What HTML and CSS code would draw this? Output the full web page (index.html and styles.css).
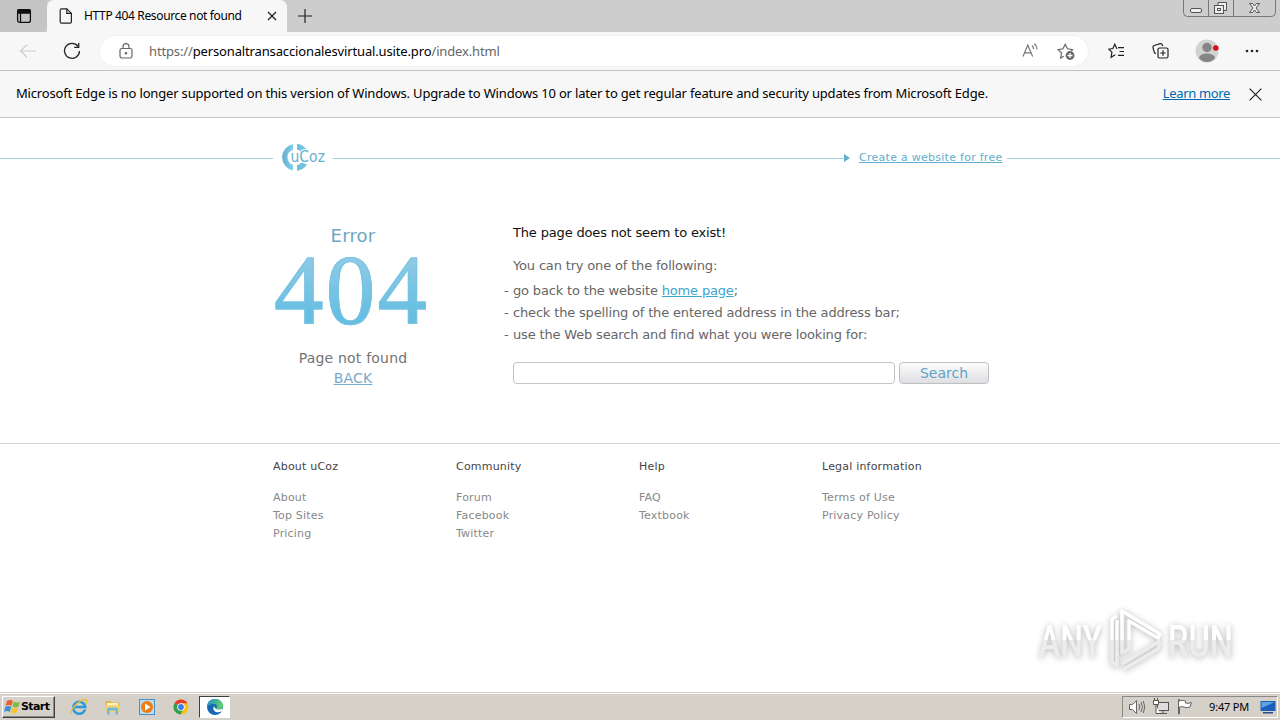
FILE: index.html
```html
<!DOCTYPE html>
<html lang="en">
<head>
  <meta charset="utf-8">
  <title>HTTP 404 Resource not found</title>
  <link rel="stylesheet" href="styles.css">
</head>
<body>
  <div class="titlebar">
    <div class="tab-actions">
      <svg width="16" height="16" viewBox="0 0 16 16" fill="none" stroke="#111" stroke-width="1.3"><rect x="1.6" y="1.6" width="12.8" height="12.8" rx="2"/><path d="M2 2h12v3H2z" fill="#111"/><path d="M4.5 5v9"/></svg>
    </div>
    <div class="tab">
      <svg width="14" height="16" viewBox="0 0 14 16" fill="none" stroke="#222" stroke-width="1.2"><path d="M2.6.8h5.2l4.6 4.6v8.3c0 .8-.6 1.5-1.4 1.5H2.6c-.8 0-1.4-.7-1.4-1.5V2.3C1.2 1.4 1.8.8 2.6.8z"/><path d="M7.8.8v4.6h4.6"/></svg>
      <span class="tab-title">HTTP 404 Resource not found</span>
      <svg class="tab-close" width="10" height="10" viewBox="0 0 10 10" stroke="#222" stroke-width="1.3"><path d="M1 1l8 8M9 1l-8 8"/></svg>
    </div>
    <svg class="new-tab" width="16" height="16" viewBox="0 0 16 16" stroke="#222" stroke-width="1.2"><path d="M8 1v14M1 8h14"/></svg>
    <div class="window-buttons">
      <svg width="93" height="17" viewBox="0 0 93 17" fill="none" stroke="#777">
        <path d="M.5 0v12.5q0 4 4 4h84q4 0 4-4V0M25.5 0v16M50.5 0v16"/>
        <rect x="7.500" y="8.500" width="11" height="4" rx="1.500" fill="#eee" stroke="#555"/>
        <path d="M35 5.500V2.500h8.500v8H41" fill="#eee" stroke="#555"/>
        <rect x="31.500" y="5.500" width="9" height="8" fill="#eee" stroke="#555"/>
        <rect x="34.500" y="8.500" width="3" height="2" stroke="#555"/>
        <path d="M66.500 3.500h3l2 2.500 2-2.500h3l-3.500 4.500 3.500 4.500h-3l-2-2.500-2 2.500h-3l3.500-4.500z" fill="#eee" stroke="#555"/>
      </svg>
    </div>
  </div>

  <div class="toolbar">
    <svg class="back" width="18" height="14" viewBox="0 0 18 14" fill="none" stroke="#ccc" stroke-width="1.2"><path d="M17 7H1.500M8 .8L1.500 7 8 13.200"/></svg>
    <svg class="reload" width="18" height="18" viewBox="0 0 18 18" fill="none" stroke="#222" stroke-width="1.3"><path d="M15 4.300A7.500 7.500 0 1 0 16.500 9"/><path d="M15.700 1v4.300h-4.500"/></svg>
    <div class="address">
      <svg width="14" height="16" viewBox="0 0 14 16" fill="none" stroke="#666" stroke-width="1.2"><rect x="1" y="5.500" width="12" height="9.500" rx="1.800"/><path d="M4 5.500V3.600a3 3 0 0 1 6 0v1.900"/><circle cx="7" cy="10.300" r=".7" fill="#666"/></svg>
      <span class="url">https://<b>personaltransaccionalesvirtual.usite.pro</b>/index.html</span>
      <svg class="read" width="18" height="16" viewBox="0 0 18 16" fill="none" stroke="#777" stroke-width="1.2"><path d="M2 13.500L6.800 2l4.800 11.500M3.700 9.800h6.200M11 2.500q1.500 1.500 1.500 3.600M13.300.5q2.700 2.500 2.700 6"/></svg>
      <svg class="star-add" width="18" height="18" viewBox="0 0 18 18" fill="none" stroke="#666" stroke-width="1.2"><path d="M6.700 14.300L3.700 16l.8-5L1 7.600l5-.8L8.200 2.300l2.300 4.500 5 .8-1.300 1.400"/><circle cx="13" cy="13.500" r="4.400" fill="#666" stroke="none"/><path d="M13 11v5M10.500 13.500h5" stroke="#fff" stroke-width="1.3"/></svg>
    </div>
    <div class="toolbar-icons">
      <svg width="18" height="16" viewBox="0 0 18 16" fill="none" stroke="#222" stroke-width="1.2"><path d="M10 4.600h6M11.500 8.500h4.500M10 12.400h6"/><path d="M9.300 5.500h-.6L6.800 1.200 4.900 5.500.9 6.200l3 3-.8 5.100 4.200-2.500"/></svg>
      <svg width="18" height="18" viewBox="0 0 18 18" fill="none" stroke="#222" stroke-width="1.2"><rect x="6" y="6" width="10" height="10" rx="1.500"/><path d="M11 8.300v5.400M8.300 11h5.400"/><path d="M4 11.500c-1 0-1.500-.5-1.800-1.500L1 5.600c-.2-1 .2-1.800 1.200-2.100l6-1.800c1-.2 1.800.2 2.100 1.200l.6 1"/></svg>
      <svg width="24" height="24" viewBox="0 0 24 24"><circle cx="12" cy="12" r="11.500" fill="#d2d2d2"/><circle cx="12" cy="8.500" r="4.700" fill="#858585"/><path d="M4 19q1-4.500 8-4.500t8 4.500q-3 4-8 4t-8-4z" fill="#858585"/><circle cx="20.800" cy="9" r="2.800" fill="#e00b1c"/></svg>
      <svg width="14" height="4" viewBox="0 0 14 4" fill="#222"><circle cx="2" cy="2" r="1.300"/><circle cx="7" cy="2" r="1.300"/><circle cx="12" cy="2" r="1.300"/></svg>
    </div>
  </div>

  <div class="infobar">
    <span class="info-text">Microsoft Edge is no longer supported on this version of Windows. Upgrade to Windows 10 or later to get regular feature and security updates from Microsoft Edge.</span>
    <a class="learn-more" href="#">Learn more</a>
    <svg width="13" height="13" viewBox="0 0 13 13" stroke="#222" stroke-width="1.2"><path d="M.6.6l11.800 11.800M12.400.6L.6 12.400"/></svg>
  </div>

  <div class="page">
    <div class="header">
      <span class="line line-left"></span>
      <svg class="logo" width="60" height="30" viewBox="0 0 60 30">
        <defs><linearGradient id="ring" x2="1" y2="0"><stop offset="0" stop-color="#68aed2"/><stop offset="1" stop-color="#7fd1e8"/></linearGradient></defs>
        <path d="M20 1A13.500 13.500 0 0 0 20 27.500V22Q14.500 19.500 14.500 14.200T20 6.500z" fill="url(#ring)"/>
        <path d="M24 .8Q30.500 1.500 34 7.500L28.500 9Q27 7 24 6.500zM24 27.700Q30.500 27 34 21.500L28.500 19.500Q27 21.500 24 22z" fill="#6fc3df"/>
        <text x="17.500" y="19" class="logo-text" textLength="34.500" lengthAdjust="spacingAndGlyphs">uCoz</text>
      </svg>
      <span class="line line-mid"></span>
      <span class="arrow"></span>
      <a class="create" href="#">Create a website for free</a>
      <span class="line line-right"></span>
    </div>

    <div class="content">
      <div class="error">
        <div class="error-label">Error</div>
        <div class="error-code">404</div>
        <div class="error-text">Page not found<br><a href="#">BACK</a></div>
      </div>
      <div class="help">
        <h1>The page does not seem to exist!</h1>
        <p>You can try one of the following:</p>
        <ul>
          <li>go back to the website <a href="#">home page</a>;</li>
          <li>check the spelling of the entered address in the address bar;</li>
          <li>use the Web search and find what you were looking for:</li>
        </ul>
        <form class="search">
          <input type="text">
          <button type="button">Search</button>
        </form>
      </div>
    </div>

    <div class="footer">
      <div class="col">
        <h2>About uCoz</h2>
        <a>About</a>
        <a>Top Sites</a>
        <a>Pricing</a>
      </div>
      <div class="col">
        <h2>Community</h2>
        <a>Forum</a>
        <a>Facebook</a>
        <a>Twitter</a>
      </div>
      <div class="col">
        <h2>Help</h2>
        <a>FAQ</a>
        <a>Textbook</a>
      </div>
      <div class="col">
        <h2>Legal information</h2>
        <a>Terms of Use</a>
        <a>Privacy Policy</a>
      </div>
    </div>

    <svg class="watermark" width="230" height="76" viewBox="0 0 230 76">
      <defs><linearGradient id="wm" gradientUnits="userSpaceOnUse" x1="0" y1="0" x2="0" y2="66"><stop offset=".52" stop-color="#fff"/><stop offset=".52" stop-color="#ececec"/></linearGradient></defs>
      <g class="wm-text" fill="url(#wm)">
        <text x="9" y="51" textLength="63" lengthAdjust="spacingAndGlyphs">ANY</text>
        <text x="138" y="51" textLength="65" lengthAdjust="spacingAndGlyphs">RUN</text>
      </g>
      <g class="wm-mark" stroke="url(#wm)">
        <path d="M87 10l-5 3v43l5 4V14M92 47V5l38 23-2 4-29-17v28zM92 58l38-23M94 63l34-20 2-6"/>
      </g>
    </svg>
  </div>

  <div class="taskbar">
    <div class="start">
      <svg width="17" height="16" viewBox="0 0 17 16"><path d="M3 2q3-2 6 0L7.500 7q-3-2-6 0z" fill="#e9602c"/><path d="M10 2.500q3 2 6 0L14.500 7.500q-3 2-6 0z" fill="#7fba42"/><path d="M1.200 8q3-2 6 0L5.700 13q-3-2-5.500 0z" fill="#3c8fd6"/><path d="M8.200 8.500q3 2 6 0L12.700 13.500q-3 2-6 0z" fill="#f8c32c"/></svg>
      <span>Start</span>
    </div>
    <div class="launch">
      <svg width="18" height="18" viewBox="0 0 18 18" fill="none"><path d="M15 11.500A6 6 0 1 1 15.200 9H5" stroke="#2d9ad8" stroke-width="2.600"/><path d="M1.500 16C-1 12 10 1 16 1.500q2 .5 0 4" stroke="#e9bd3a" stroke-width="1.300"/></svg>
      <svg width="18" height="18" viewBox="0 0 18 18"><path d="M1.500 3h5l1 1.500h8V14h-14z" fill="#dfb84c"/><path d="M3 5h11v3H3z" fill="#fff4c2"/><path d="M1.500 7h14v7h-14z" fill="#f3d673"/><path d="M3 16.500v-5q0-2 2-2h7q2 0 2 2v5h-2.500v-4h-6v4z" fill="#6fb9dc"/></svg>
      <svg width="18" height="18" viewBox="0 0 18 18"><rect x="1.500" y="1.500" width="15" height="15" fill="#b9dcf3" stroke="#4e8fc8"/><circle cx="9" cy="9" r="6" fill="#ee7d13"/><path d="M7 5.500l5.500 3.500L7 12.500z" fill="#fff"/></svg>
      <svg width="18" height="18" viewBox="0 0 18 18"><circle cx="9" cy="9" r="7.500" fill="#fbc116"/><path d="M9 9L2.500 5.200A7.500 7.500 0 0 1 15.500 5.200H9z" fill="#e33b2e"/><path d="M2.500 5.200A7.500 7.500 0 0 0 8.500 16.500L11.500 11 9 9z" fill="#2da14c"/><circle cx="9" cy="9" r="3.800" fill="#fff"/><circle cx="9" cy="9" r="2.900" fill="#3b7de8"/></svg>
    </div>
    <div class="running">
      <svg width="18" height="18" viewBox="0 0 18 18"><defs><linearGradient id="edge" x2="1" y2=".3"><stop offset="0" stop-color="#2389d4"/><stop offset="1" stop-color="#5bd269"/></linearGradient></defs><circle cx="9" cy="9" r="8" fill="#1668b3"/><path d="M1 8.500C2 3 5 1 9 1c5 0 8 3.500 8 6.500 0 2.500-2 4-4.500 4-1.500 0-2.500-.7-2-1.500 1.500-2 0-4-3-4C4.500 6 2 7 1 8.500z" fill="url(#edge)"/><path d="M8 8q-2 4 2 6 3 1 6-1l1-2.500q-3 1.500-6 .8Q8.500 10.500 8 8z" fill="#fff"/></svg>
    </div>
    <div class="tray">
      <svg width="18" height="18" viewBox="0 0 18 18" fill="none" stroke="#666"><path d="M1.500 6.500h3l4-4v13l-4-4h-3z" fill="#fff"/><path d="M11 6q1.500 3 0 6M13 4q3 5 0 10M15.300 3q3 6 0 12"/></svg>
      <svg width="18" height="18" viewBox="0 0 18 18" fill="none" stroke="#555"><rect x="5.500" y="4.500" width="11" height="8" fill="#ddd"/><path d="M7 15.500h8M11 13v2"/><path d="M1.500 2.500h5v4h-5zM4 7v8.500h4M2.500 0v2M5.500 0v2" fill="#fff"/></svg>
      <svg width="18" height="18" viewBox="0 0 18 18" fill="#fff" stroke="#666"><path d="M2.500 16V1.500h1V3q3-1.500 6 0v2q3 1 6-.5L14 9q-3 1.500-6 0-2-.8-4.500 0v7z"/></svg>
      <span class="clock">9:47 PM</span>
      <svg width="16" height="14" viewBox="0 0 16 14"><path d="M.5 1h15v10H.5z" fill="#1c5fb8"/><path d="M1.500 2h13L1.500 8z" fill="#5da3e4"/><path d="M3 12h10v1.500H3z" fill="#234e83"/></svg>
    </div>
  </div>
</body>
</html>
```
FILE: styles.css
```css
* {
  box-sizing: border-box;
}

body {
  margin: 0;
  width: 1280px;
  height: 720px;
  overflow: hidden;
  display: flex;
  flex-direction: column;
  background: #fff;
  font-family: "DejaVu Sans", Verdana, sans-serif;
}

svg {
  display: block;
  flex: none;
}

/* browser chrome */
.titlebar {
  height: 32px;
  display: flex;
  align-items: center;
  background: #cdcdcd;
  font-family: "Noto Sans", sans-serif;
}

.tab-actions {
  width: 47px;
  height: 32px;
  padding: 8px 0 0 16px;
  background: #c5c5c5;
  border-radius: 0 0 7px 0;
}

.tab {
  width: 240px;
  height: 32px;
  display: flex;
  align-items: center;
  padding: 0 10px 0 12px;
  background: #f7f7f7;
  border-radius: 7px 7px 0 0;
}

.tab-title {
  margin-left: 11px;
  margin-top: -1px;
  font-size: 12px;
  letter-spacing: -0.36px;
  white-space: nowrap;
}

.tab-close {
  margin-left: auto;
}

.new-tab {
  margin-left: 10px;
}

.window-buttons {
  margin-left: auto;
  margin-right: 4px;
  align-self: flex-start;
}

.toolbar {
  height: 39px;
  display: flex;
  align-items: center;
  background: #f7f7f7;
  border-bottom: 1px solid #c2c2c2;
}

.back {
  margin-left: 19px;
}

.reload {
  margin-left: 26px;
}

.address {
  width: 988px;
  height: 30px;
  margin-left: 19px;
  padding: 0 13px 0 19px;
  display: flex;
  align-items: center;
  background: #fff;
  border-radius: 15px;
  box-shadow: 0 0 0 1px #f1f1f1;
}

.url {
  margin-left: 16px;
  color: #666;
  font: 13px "Noto Sans", sans-serif;
  letter-spacing: -0.14px;
  white-space: nowrap;
}

.url b {
  font-weight: normal;
  color: #000;
}

.read {
  margin-left: auto;
}

.star-add {
  margin-left: 18px;
}

.toolbar-icons {
  flex: 1;
  display: flex;
  align-items: center;
  justify-content: space-between;
  padding: 0 21px 0 20px;
}

.infobar {
  height: 47px;
  display: flex;
  align-items: center;
  padding: 0 18px 0 16px;
  background: #f7f7f7;
  border-bottom: 1px solid #c8c8c8;
  font: 13px "Noto Sans", sans-serif;
  letter-spacing: -0.175px;
  white-space: nowrap;
}

.info-text,
.learn-more {
  margin-top: -2px;
}

.learn-more {
  margin-left: auto;
  margin-right: 19px;
  letter-spacing: -0.35px;
  color: #0067b0;
}

/* error page */
.page {
  flex: 1;
  position: relative;
}

.header {
  height: 30px;
  margin-top: 25px;
  display: flex;
  align-items: center;
}

.line {
  height: 1px;
  background: #a5d0e2;
}

.line-left {
  width: 273px;
}

.line-mid {
  width: 511px;
}

.line-right {
  flex: 1;
  margin-left: 5px;
}

.logo-text {
  font: 16px "DejaVu Sans", sans-serif;
  fill: #69b0d0;
  stroke: #fff;
  stroke-width: 2px;
  paint-order: stroke;
}

.arrow {
  border: 4px solid transparent;
  border-left: 6px solid #5fb0cf;
  border-right: 0;
}

.create {
  margin-left: 9px;
  margin-top: -2px;
  font-size: 11px;
  letter-spacing: 0.27px;
  color: #62aeca;
  white-space: nowrap;
}

.content {
  width: 734px;
  height: 270px;
  margin: 0 auto;
  padding-top: 50px;
  display: flex;
}

.error {
  width: 160px;
  text-align: center;
  color: #737373;
}

.error-label {
  height: 24px;
  margin-top: 1px;
  font-size: 18px;
  line-height: 24px;
  letter-spacing: 0.2px;
  color: #6fa6c4;
}

.error-code {
  height: 100px;
  margin-left: 1px;
  font: 99px/83px "Liberation Serif", serif;
  letter-spacing: 2.2px;
  text-align: left;
  color: transparent;
  background: linear-gradient(#8fcae6 10%, #66bfe2 65%);
  -webkit-background-clip: text;
  background-clip: text;
  -webkit-text-stroke: 1px #78c3e2;
}

.error-text {
  font-size: 14px;
  line-height: 20px;
  letter-spacing: 0.2px;
}

.error-text a {
  color: #79a9cb;
}

.help {
  margin-left: 80px;
  font-size: 13px;
  letter-spacing: -0.165px;
  color: #666;
  white-space: nowrap;
}

.help h1 {
  margin: 0;
  font-size: 13px;
  font-weight: normal;
  line-height: 20px;
  color: #111;
}

.help p {
  margin: 13px 0 4px;
  line-height: 20px;
}

.help ul {
  margin: 0;
  padding: 0;
  list-style: none;
  line-height: 22px;
}

.help li::before {
  content: "-";
  display: inline-block;
  width: 9px;
  margin-left: -9px;
}

.help a {
  color: #3ba4cf;
}

.search {
  display: flex;
  margin-top: 16px;
}

.search input {
  width: 382px;
  height: 22px;
  border: 1px solid #c4c4c4;
  border-radius: 4px;
}

.search button {
  width: 90px;
  height: 22px;
  margin-left: 4px;
  padding: 0;
  border: 1px solid #bfbfbf;
  border-radius: 4px;
  background: linear-gradient(#fdfdfd, #dedfe3);
  font: 14px "DejaVu Sans", sans-serif;
  color: #62a3c6;
}

.footer {
  height: 120px;
  padding: 14px 0 0 273px;
  display: flex;
  border-top: 1px solid #d3d3d3;
}

.col {
  width: 183px;
  font-size: 11px;
  line-height: 18px;
  letter-spacing: 0.2px;
  color: #888;
}

.col h2 {
  margin: 0 0 13px;
  font-size: 11px;
  font-weight: normal;
  line-height: 18px;
  color: #444;
}

.col a {
  display: block;
}

.watermark {
  position: absolute;
  left: 1030px;
  top: 488px;
  filter: drop-shadow(0 1px 3px rgba(0, 0, 0, 0.3));
}

.wm-text {
  font: 500 45px Roboto, sans-serif;
}

.wm-mark {
  fill: none;
  stroke-width: 3.5;
  stroke-linejoin: round;
}

/* taskbar */
.taskbar {
  height: 28px;
  display: flex;
  align-items: center;
  background: #d5d1c9;
  border-top: 1px solid #d5d1c9;
  box-shadow: inset 0 1px #fff;
}

.start {
  width: 53px;
  height: 22px;
  margin-left: 2px;
  padding-left: 1px;
  display: flex;
  align-items: center;
  border: 1px solid;
  border-color: #fff #404040 #404040 #fff;
  box-shadow: inset -1px -1px #888;
  font: bold 11px "DejaVu Sans", sans-serif;
  letter-spacing: -0.6px;
}

.launch {
  display: flex;
  gap: 16px;
  margin-left: 15px;
}

.running {
  width: 31px;
  height: 22px;
  margin-left: 9px;
  padding: 1px 0 0 6px;
  background: #fff;
  border: 1px solid;
  border-color: #404040 #fff #fff #404040;
}

.tray {
  width: 156px;
  height: 22px;
  margin: 0 2px 0 auto;
  padding: 0 1px 0 5px;
  display: flex;
  align-items: center;
  gap: 6px;
  border: 1px solid;
  border-color: #888 #fff #fff #888;
}

.clock {
  margin-left: auto;
  margin-right: 5px;
  font: 11px "Noto Sans", sans-serif;
  letter-spacing: -0.2px;
  white-space: nowrap;
}
```
